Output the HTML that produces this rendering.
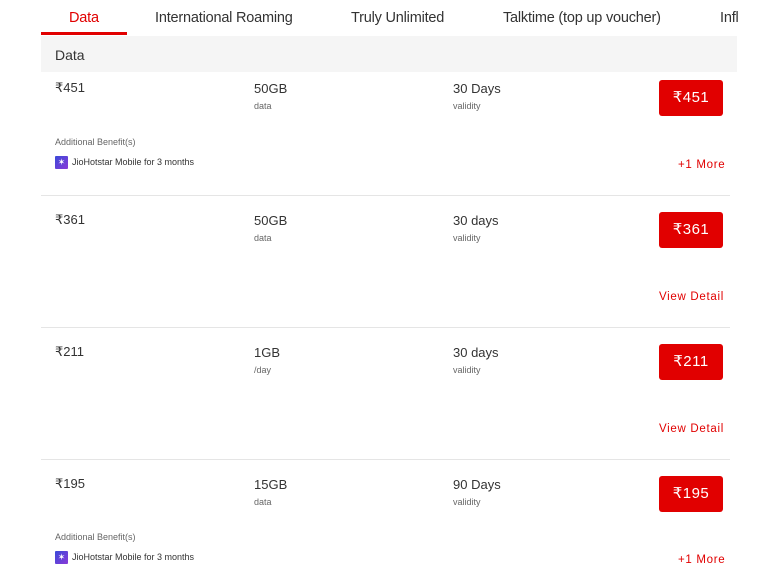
<!DOCTYPE html>
<html><head><style>
body{margin:0;width:768px;height:575px;overflow:hidden;background:#fff;font-family:"Liberation Sans",sans-serif;color:#333;position:relative}
.a{position:absolute;white-space:nowrap}
.tab{font-size:14.5px;top:10px;color:#333;letter-spacing:-0.2px}
.hdr{position:absolute;left:41px;top:36px;width:696px;height:36px;background:#f5f5f5}
.p{font-size:13px;color:#333}
.s{font-size:9px;color:#666}
.btn{position:absolute;left:659px;width:64px;height:36px;background:#e10000;border-radius:3px;color:#fff;font-size:15px;line-height:36px;text-align:center;letter-spacing:0.5px}
.line{position:absolute;left:41px;width:689px;height:1px;background:#e5e5e5}
.red{color:#e10000;font-size:11.5px;letter-spacing:0.7px}
.ic{position:absolute;width:13px;height:13px;background:linear-gradient(135deg,#3a4ad8,#8a3ad8);border-radius:1px;color:#fff;font-size:9px;line-height:13px;text-align:center}
</style></head><body>
<div class="a tab" style="left:69px;color:#e10000">Data</div>
<div class="a tab" style="left:155px">International Roaming</div>
<div class="a tab" style="left:351px">Truly Unlimited</div>
<div class="a tab" style="left:503px">Talktime (top up voucher)</div>
<div class="a tab" style="left:720px">Infl</div>
<div style="position:absolute;left:41px;top:32px;width:86px;height:3px;background:#e10000"></div>
<div class="hdr"></div>
<div class="a" style="left:55px;top:47px;font-size:14px">Data</div>

<div class="a p" style="left:55px;top:80px">₹451</div>
<div class="a p" style="left:254px;top:81px">50GB</div><div class="a s" style="left:254px;top:101px">data</div>
<div class="a p" style="left:453px;top:81px">30 Days</div><div class="a s" style="left:453px;top:101px">validity</div>
<div class="btn" style="top:80px">₹451</div>
<div class="a s" style="left:55px;top:137px">Additional Benefit(s)</div>
<div class="ic" style="left:55px;top:156px">✶</div><div class="a s" style="left:72px;top:157px;color:#333">JioHotstar Mobile for 3 months</div>
<div class="a red" style="left:678px;top:159px">+1 More</div>
<div class="line" style="top:195px"></div>

<div class="a p" style="left:55px;top:212px">₹361</div>
<div class="a p" style="left:254px;top:213px">50GB</div><div class="a s" style="left:254px;top:233px">data</div>
<div class="a p" style="left:453px;top:213px">30 days</div><div class="a s" style="left:453px;top:233px">validity</div>
<div class="btn" style="top:212px">₹361</div>
<div class="a red" style="left:659px;top:291px">View Detail</div>
<div class="line" style="top:327px"></div>

<div class="a p" style="left:55px;top:344px">₹211</div>
<div class="a p" style="left:254px;top:345px">1GB</div><div class="a s" style="left:254px;top:365px">/day</div>
<div class="a p" style="left:453px;top:345px">30 days</div><div class="a s" style="left:453px;top:365px">validity</div>
<div class="btn" style="top:344px">₹211</div>
<div class="a red" style="left:659px;top:423px">View Detail</div>
<div class="line" style="top:459px"></div>

<div class="a p" style="left:55px;top:476px">₹195</div>
<div class="a p" style="left:254px;top:477px">15GB</div><div class="a s" style="left:254px;top:497px">data</div>
<div class="a p" style="left:453px;top:477px">90 Days</div><div class="a s" style="left:453px;top:497px">validity</div>
<div class="btn" style="top:476px">₹195</div>
<div class="a s" style="left:55px;top:532px">Additional Benefit(s)</div>
<div class="ic" style="left:55px;top:551px">✶</div><div class="a s" style="left:72px;top:552px;color:#333">JioHotstar Mobile for 3 months</div>
<div class="a red" style="left:678px;top:554px">+1 More</div>
</body></html>
